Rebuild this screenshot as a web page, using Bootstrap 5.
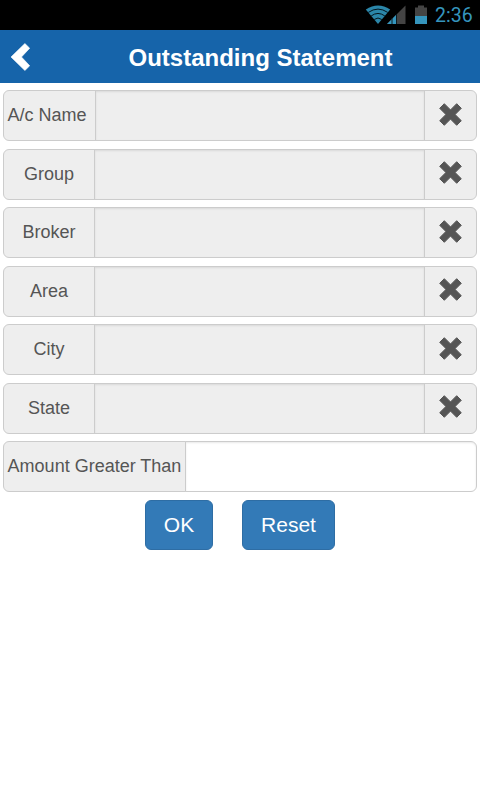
<!DOCTYPE html>
<html lang="en">
<head>
<meta charset="utf-8">
<meta name="viewport" content="width=device-width, initial-scale=1">
<title>Outstanding Statement</title>
<link href="https://cdn.jsdelivr.net/npm/bootstrap@5.3.0/dist/css/bootstrap.min.css" rel="stylesheet">
<style>
body { font-family: "Liberation Sans", Arial, sans-serif; background: #fff; overflow: hidden; }
.status-bar { height: 30px; background: #000; color: #3595bd; padding-right: 7px; font: 19.5px/30px Roboto, sans-serif; }
.status-bar svg { display: block; flex: none; }
.clock { width: 38px; margin-left: 7px; padding-top: 2px; white-space: nowrap; }
.app-bar { height: 53px; background: #1664aa; }
.app-bar h1 { font-size: 24px; line-height: 30px; font-weight: 700; margin-top: 2px; }
.back-btn { width: 41px; padding: 0 0 0 10px; line-height: 0; }
.fields { padding: 7.25px 3px 0; gap: 7.5px; }
.fields .input-group { height: 51px; flex-wrap: nowrap; }
.fields .input-group-text { background: #eee; border-color: #ccc; color: #555; font-size: 18px; line-height: 24px; padding: 0 3px 1.4px; border-radius: 6px; justify-content: center; width: 92px; }
.fields .first-label { width: 93px; padding-right: 8px; }
.fields .wide-label { width: 183px; padding-right: 3px; }
.fields .form-control { border-color: #ccc; border-radius: 6px; box-shadow: inset 0 1px 2px rgba(0,0,0,.09); font-size: 18px; }
.fields .form-control:read-only { background: #eee; }
.fields .clear-btn { width: 53px; padding: 0 1px 3px 0; }
.actions { gap: 29px; padding-top: 7.75px; }
.actions .btn { height: 50px; font-size: 21px; line-height: 28px; padding: 0; border-radius: 6px; background: #337ab7; border-color: #2e6da4; }
.ok-btn { width: 68px; }
.reset-btn { width: 93px; }
</style>
</head>
<body>
<svg class="d-none" aria-hidden="true">
  <symbol id="cross" viewBox="0 0 23 23"><path fill="#555" stroke="#555" stroke-width="1" stroke-linejoin="round" d="M5.300 .7 11.500 6.900 17.700 .7 22.300 5.300 16.100 11.500 22.300 17.700 17.700 22.300 11.500 16.100 5.300 22.300 .7 17.700 6.900 11.500 .7 5.300z"/></symbol>
</svg>
<div class="status-bar d-flex align-items-center justify-content-end">
  <svg width="41" height="20" viewBox="0 0 41 20">
    <path d="M13 19 .8 4.500Q13-3.500 25.200 4.500z" fill="#2b86a9"/>
    <g fill="none" stroke="#03141b" stroke-width="1"><path d="M3.300 7.400Q13 .8 22.700 7.400M6.200 10.900Q13 6 19.800 10.900M9.200 14.500Q13 11.500 16.800 14.500"/></g>
    <path d="M40.500 .5v18.500H22z" fill="#444"/>
    <path d="M31.500 9.500V19H22z" fill="#3595bd"/>
    <path d="M27 13V19M31.500 9V19" stroke="#0b1c23" fill="none"/>
  </svg>
  <svg class="ms-1" width="18" height="20" viewBox="0 0 18 20"><path d="M5 2.500H8V.5H14V2.500H17V11H5z" fill="#444"/><path d="M5 11h12v8H5z" fill="#3595bd"/></svg>
  <span class="clock">2:36</span>
</div>
<header class="app-bar d-flex align-items-center text-white">
  <button class="back-btn btn border-0" type="button" aria-label="Back"><svg class="d-block" width="21" height="28" viewBox="0 0 21 28"><path fill="#fff" stroke="#fff" stroke-width=".6" stroke-linejoin="round" d="M14.900 .5 19.700 5.200 11.500 14 19.700 22.800 14.900 27.500 1 14z"/></svg></button>
  <h1 class="flex-grow-1 text-center mb-0">Outstanding Statement</h1>
</header>
<main>
  <div class="fields d-flex flex-column">
    <div class="input-group"><label class="input-group-text first-label" for="f1">A/c Name</label><input id="f1" class="form-control" readonly><button class="input-group-text clear-btn" type="button" aria-label="Clear"><svg width="23" height="23"><use href="#cross"/></svg></button></div>
    <div class="input-group"><label class="input-group-text" for="f2">Group</label><input id="f2" class="form-control" readonly><button class="input-group-text clear-btn" type="button" aria-label="Clear"><svg width="23" height="23"><use href="#cross"/></svg></button></div>
    <div class="input-group"><label class="input-group-text" for="f3">Broker</label><input id="f3" class="form-control" readonly><button class="input-group-text clear-btn" type="button" aria-label="Clear"><svg width="23" height="23"><use href="#cross"/></svg></button></div>
    <div class="input-group"><label class="input-group-text" for="f4">Area</label><input id="f4" class="form-control" readonly><button class="input-group-text clear-btn" type="button" aria-label="Clear"><svg width="23" height="23"><use href="#cross"/></svg></button></div>
    <div class="input-group"><label class="input-group-text" for="f5">City</label><input id="f5" class="form-control" readonly><button class="input-group-text clear-btn" type="button" aria-label="Clear"><svg width="23" height="23"><use href="#cross"/></svg></button></div>
    <div class="input-group"><label class="input-group-text" for="f6">State</label><input id="f6" class="form-control" readonly><button class="input-group-text clear-btn" type="button" aria-label="Clear"><svg width="23" height="23"><use href="#cross"/></svg></button></div>
    <div class="input-group"><label class="input-group-text wide-label" for="f7">Amount Greater Than</label><input id="f7" class="form-control"></div>
  </div>
  <div class="actions d-flex justify-content-center">
    <button class="btn btn-primary ok-btn" type="button">OK</button>
    <button class="btn btn-primary reset-btn" type="button">Reset</button>
  </div>
</main>
<script src="https://cdn.jsdelivr.net/npm/bootstrap@5.3.0/dist/js/bootstrap.bundle.min.js"></script>
</body>
</html>
